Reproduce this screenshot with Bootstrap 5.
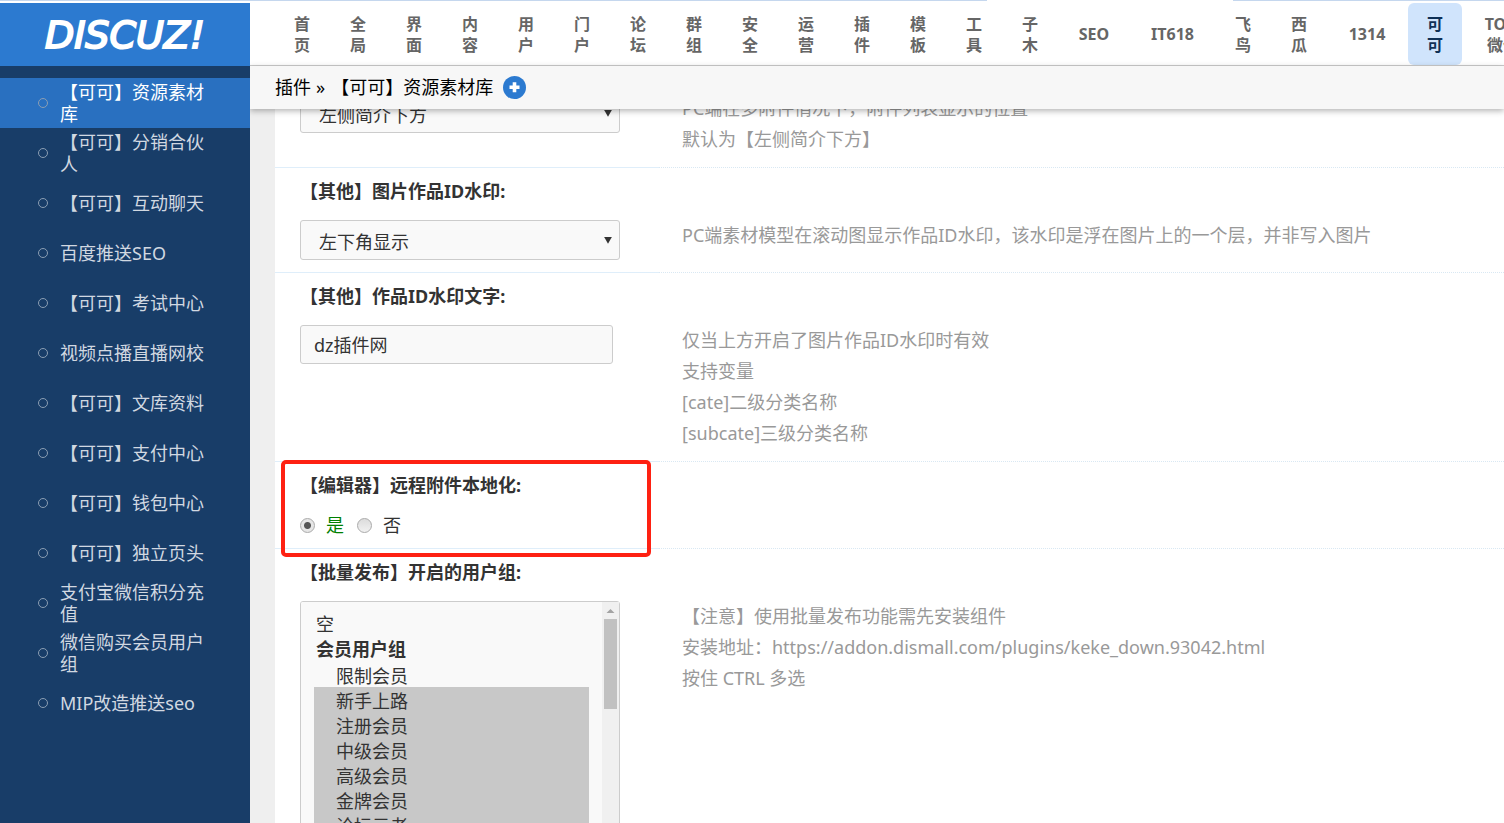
<!DOCTYPE html>
<html lang="zh-CN">
<head>
<meta charset="utf-8">
<meta name="viewport" content="width=device-width, initial-scale=1">
<title>Discuz! 管理中心</title>
<link href="https://cdn.jsdelivr.net/npm/bootstrap@5.3.0/dist/css/bootstrap.min.css" rel="stylesheet">
<style>
  body { font-family: "Noto Sans", "Noto Sans CJK SC", sans-serif; font-size: 18px; color: #333; background: #efefef; }
  .top-line { height: 3px; background: #fff; }
  .top-line span { height: 1px; background: #c5d7ee; }
  .line-gap { flex: 0 0 246px; }
  .line-left { flex: 0 0 987px; }

  .side { width: 250px; background: #183d68; }
  .brand { height: 63px; background: #2c7ad0; color: #fff; font: italic 400 38px/64px "DejaVu Sans", sans-serif; -webkit-text-stroke: 2px #fff; }
  .brand:hover { color: #fff; }
  .side-link { height: 50px; padding: 0 36px 0 38px; gap: 12px; line-height: 22px; color: #d1d8e1; text-decoration: none; }
  .side-link::before { content: ""; flex: 0 0 10px; height: 10px; border: 1px solid #8b9eb3; border-radius: 5px; }
  .side-link.active { background: #2970c0; color: #fff; }

  .topnav { height: 63px; padding-left: 25px; gap: 2px; background: #fff; border-bottom: 1px solid #ccc; }
  .topnav a { flex: none; width: 54px; padding: 2px 19px 0; border-radius: 6px; font-size: 16px; font-weight: 700; line-height: 21px; color: #666; text-align: center; text-decoration: none; word-break: break-all; }
  .topnav a.wide { padding: 2px 0 0; width: 70px; }
  .topnav a.wider { padding: 2px 0 0; width: 78px; }
  .topnav a.widest { padding: 2px 0 0; width: 83px; }
  .topnav a.active { background: #d0e4fc; color: #0f3056; }
  .crumbs { height: 43px; padding-left: 25px; background: #f7f7f7; color: #000; box-shadow: 0 2px 6px rgba(0,0,0,.3); z-index: 2; }
  .crumbs a { color: #000; text-decoration: none; }
  .crumb-sep { margin: 0 6px 0 5px; }
  .add-btn { width: 23px; height: 23px; border: 0; padding: 0; margin-left: 10px; background: none; }

  .sheet { margin: -16px 0 0 25px; background: #fff; }
  .setting-main { flex: 0 0 384px; padding: 0 0 12px 25px; border-bottom: 1px solid #dfeefa; }
  .setting-note { padding: 0 0 12px 23px; line-height: 31px; color: #999; border-bottom: 1px dotted #d9e8f3; }
  .titled .setting-note { padding-top: 52px; }
  .setting-title { display: block; height: 52px; padding-top: 11px; font-weight: 700; line-height: 24px; }
  .field { border: 1px solid #ccc; border-radius: 3px; background: #f9f9f9; color: #333; outline: 0; }
  .drop-box { width: 320px; }
  select.drop { width: 100%; height: 40px; padding: 5px 18px 0; appearance: none; }
  .drop-arrow { right: 8px; top: 17px; width: 8px; height: 7px; background: #333; clip-path: polygon(0 0, 100% 0, 50% 100%); pointer-events: none; }
  input.field { width: 313px; height: 39px; padding: 0 13px; }
  .choice { height: 22px; }
  .choice label { margin: 0 13px 0 11px; line-height: 22px; }
  .choice input { appearance: none; width: 15px; height: 15px; margin: 1px 0 0; border: 1px solid #aaa; border-radius: 50%; background: linear-gradient(#dcdcdc, #f1f1f1); }
  .choice input:checked { background: radial-gradient(circle, #555 0 3px, #e6e6e6 4px); }
  .choice input:checked + label { color: #008000; }
  .callout { left: 6px; top: -2px; width: 370px; height: 97px; border: 4px solid #fe2112; border-radius: 5px; pointer-events: none; z-index: 1; }

  select.groups { width: 100%; height: 262px; padding: 8px 30px 8px 13px; overflow-y: scroll; scrollbar-width: none; }
  .groups::-webkit-scrollbar { display: none; }
  .groups option { padding: 0 2px; height: 25px; min-height: 25px; overflow: hidden; line-height: 25px; color: #333; }
  .groups optgroup { padding: 0; font-weight: 700; line-height: 25px; }
  .groups optgroup option { padding-left: 22px; font-weight: 400; }
  .groups option:checked { background: #c8c8c8 linear-gradient(#c8c8c8, #c8c8c8); }
  .scroll-rail { top: 1px; right: 1px; bottom: 1px; width: 17px; background: #f0f0f0; pointer-events: none; }
  .scroll-thumb { width: 13px; height: 90px; background: #c1c1c1; }
</style>
</head>
<body class="vh-100 overflow-hidden d-flex flex-column">
<div class="top-line d-flex"><span class="line-left"></span><div class="line-gap"></div><span class="flex-fill"></span></div>
<div class="d-flex flex-fill overflow-hidden">
  <aside class="side flex-shrink-0">
    <a class="brand d-block text-center text-decoration-none" href="#">DISCUZ!</a>
    <nav class="d-flex flex-column pt-2 mt-1">
      <a class="side-link d-flex align-items-center active" href="#">【可可】资源素材库</a>
      <a class="side-link d-flex align-items-center" href="#">【可可】分销合伙人</a>
      <a class="side-link d-flex align-items-center" href="#">【可可】互动聊天</a>
      <a class="side-link d-flex align-items-center" href="#">百度推送SEO</a>
      <a class="side-link d-flex align-items-center" href="#">【可可】考试中心</a>
      <a class="side-link d-flex align-items-center" href="#">视频点播直播网校</a>
      <a class="side-link d-flex align-items-center" href="#">【可可】文库资料</a>
      <a class="side-link d-flex align-items-center" href="#">【可可】支付中心</a>
      <a class="side-link d-flex align-items-center" href="#">【可可】钱包中心</a>
      <a class="side-link d-flex align-items-center" href="#">【可可】独立页头</a>
      <a class="side-link d-flex align-items-center" href="#">支付宝微信积分充值</a>
      <a class="side-link d-flex align-items-center" href="#">微信购买会员用户组</a>
      <a class="side-link d-flex align-items-center" href="#">MIP改造推送seo</a>
    </nav>
  </aside>
  <div class="d-flex flex-column flex-fill overflow-hidden">
    <nav class="topnav d-flex flex-shrink-0 overflow-hidden">
      <a class="d-flex align-items-center" href="#">首页</a>
      <a class="d-flex align-items-center" href="#">全局</a>
      <a class="d-flex align-items-center" href="#">界面</a>
      <a class="d-flex align-items-center" href="#">内容</a>
      <a class="d-flex align-items-center" href="#">用户</a>
      <a class="d-flex align-items-center" href="#">门户</a>
      <a class="d-flex align-items-center" href="#">论坛</a>
      <a class="d-flex align-items-center" href="#">群组</a>
      <a class="d-flex align-items-center" href="#">安全</a>
      <a class="d-flex align-items-center" href="#">运营</a>
      <a class="d-flex align-items-center" href="#">插件</a>
      <a class="d-flex align-items-center" href="#">模板</a>
      <a class="d-flex align-items-center" href="#">工具</a>
      <a class="d-flex align-items-center" href="#">子木</a>
      <a class="wide d-flex align-items-center justify-content-center" href="#">SEO</a>
      <a class="widest d-flex align-items-center justify-content-center" href="#">IT618</a>
      <a class="d-flex align-items-center" href="#">飞鸟</a>
      <a class="d-flex align-items-center" href="#">西瓜</a>
      <a class="wider d-flex align-items-center justify-content-center" href="#">1314</a>
      <a class="active d-flex align-items-center" href="#">可可</a>
      <a class="wider d-flex align-items-center justify-content-center" href="#">TOM<br>微信</a>
    </nav>
    <div class="crumbs d-flex align-items-center flex-shrink-0 position-relative">
      <a href="#">插件</a><span class="crumb-sep">»</span><span>【可可】资源素材库</span>
      <button class="add-btn d-flex" type="button" aria-label="添加">
        <svg width="23" height="23" viewBox="0 0 23 23"><circle cx="11.500" cy="11.500" r="11.500" fill="#2c7ad0"/><path d="M6.500 9.500h3.200V6.200h3.600v3.300h3.200v3.500h-3.200v3.300H9.700V13H6.500z" fill="#fff"/></svg>
      </button>
    </div>
    <main class="flex-fill overflow-hidden">
      <form class="sheet">
        <div class="d-flex">
          <div class="setting-main">
            <div class="drop-box position-relative">
              <select class="field drop" aria-label="附件列表位置"><option>左侧简介下方</option></select>
              <span class="drop-arrow position-absolute"></span>
            </div>
          </div>
          <div class="setting-note flex-fill">PC端在多附件情况下，附件列表显示的位置<br>默认为【左侧简介下方】</div>
        </div>
        <div class="titled d-flex">
          <div class="setting-main">
            <label class="setting-title" for="mark-pos">【其他】图片作品ID水印:</label>
            <div class="drop-box position-relative">
              <select class="field drop" id="mark-pos"><option>左下角显示</option></select>
              <span class="drop-arrow position-absolute"></span>
            </div>
          </div>
          <div class="setting-note flex-fill">PC端素材模型在滚动图显示作品ID水印，该水印是浮在图片上的一个层，并非写入图片</div>
        </div>
        <div class="titled d-flex">
          <div class="setting-main">
            <label class="setting-title" for="mark-text">【其他】作品ID水印文字:</label>
            <input class="field" id="mark-text" type="text" value="dz插件网">
          </div>
          <div class="setting-note flex-fill">仅当上方开启了图片作品ID水印时有效<br>支持变量<br>[cate]二级分类名称<br>[subcate]三级分类名称</div>
        </div>
        <div class="titled d-flex position-relative">
          <div class="setting-main" role="radiogroup" aria-labelledby="local-title">
            <span class="setting-title" id="local-title">【编辑器】远程附件本地化:</span>
            <div class="choice d-flex align-items-center">
              <input type="radio" name="local" id="local-yes" checked><label for="local-yes">是</label>
              <input type="radio" name="local" id="local-no"><label for="local-no">否</label>
            </div>
          </div>
          <div class="setting-note flex-fill"></div>
          <div class="callout position-absolute"></div>
        </div>
        <div class="titled d-flex">
          <div class="setting-main">
            <label class="setting-title" for="groups">【批量发布】开启的用户组:</label>
            <div class="drop-box position-relative">
              <select class="field groups d-block" id="groups" multiple>
                <option>空</option>
                <optgroup label="会员用户组">
                  <option>限制会员</option>
                  <option selected>新手上路</option>
                  <option selected>注册会员</option>
                  <option selected>中级会员</option>
                  <option selected>高级会员</option>
                  <option selected>金牌会员</option>
                  <option selected>论坛元老</option>
                  <option>禁止发言</option>
                  <option>禁止访问</option>
                  <option>禁止 IP</option>
                  <option>游客</option>
                  <option>等待验证会员</option>
                </optgroup>
              </select>
              <div class="scroll-rail position-absolute d-flex flex-column align-items-center">
                <svg class="flex-shrink-0" width="17" height="17" viewBox="0 0 17 17"><path d="M4.500 11h8l-4-4z" fill="#a3a3a3"/></svg>
                <div class="scroll-thumb"></div>
              </div>
            </div>
          </div>
          <div class="setting-note flex-fill">【注意】使用批量发布功能需先安装组件<br>安装地址：https://addon.dismall.com/plugins/keke_down.93042.html<br>按住 CTRL 多选</div>
        </div>
      </form>
    </main>
  </div>
</div>
<script src="https://cdn.jsdelivr.net/npm/bootstrap@5.3.0/dist/js/bootstrap.bundle.min.js"></script>
</body>
</html>
